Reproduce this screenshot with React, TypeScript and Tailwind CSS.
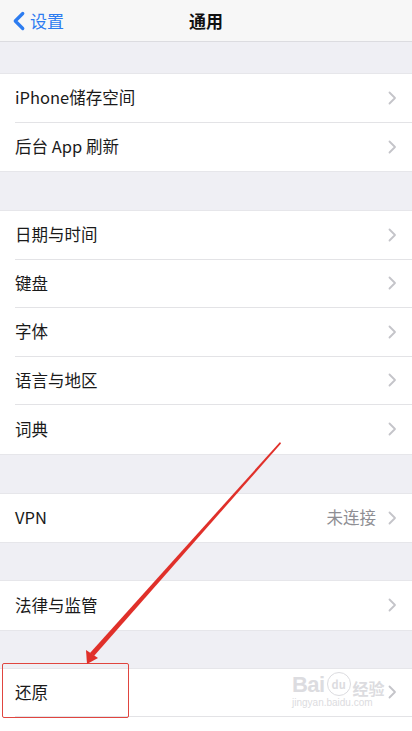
import { ChevronLeft } from "lucide-react";

const font = { fontFamily: '"Noto Sans CJK SC", "Noto Sans", sans-serif' };

function Chevron() {
  return (
    <svg width="9" height="14" viewBox="0 0 9 14" className="shrink-0">
      <path d="M1.5 1.5 L7 7 L1.5 12.5" fill="none" stroke="#c4c4c9" strokeWidth="1.8" strokeLinecap="round" strokeLinejoin="round" />
    </svg>
  );
}

function Row({ label, value, last }: { label: string; value?: string; last?: boolean }) {
  return (
    <div className="flex h-[48.5px] items-center bg-white pl-[15px]">
      <div className={"flex h-full flex-1 items-center pr-[15px] " + (last ? "" : "border-b border-[#e3e3e6]")}>
        <span className="flex-1 text-[16.5px] text-[#1a1a1a]">{label}</span>
        {value && <span className="mr-[12px] text-[16.5px] text-[#8e8e93]">{value}</span>}
        {label && <Chevron />}
      </div>
    </div>
  );
}

function Group({ items }: { items: { label: string; value?: string }[] }) {
  return (
    <div className="border-y border-[#e6e6ea]">
      {items.map((it, i) => (
        <Row key={it.label + i} label={it.label} value={it.value} last={i === items.length - 1} />
      ))}
    </div>
  );
}

export default function App() {
  return (
    <div className="relative h-[731px] w-[412px] overflow-hidden bg-[#efeff4]" style={font}>
      <div className="relative flex h-[42px] items-center border-b border-[#dcdce0] bg-[#f7f7f7]">
        <div className="flex items-center pl-[4px] text-[#2d7cf0]">
          <ChevronLeft size={30} strokeWidth={2.6} />
          <span className="-ml-[4px] text-[17px]">设置</span>
        </div>
        <span className="absolute left-1/2 -translate-x-1/2 text-[17px] font-semibold text-[#111]">通用</span>
      </div>
      <div className="h-[31px]" />
      <Group items={[{ label: "iPhone储存空间" }, { label: "后台 App 刷新" }]} />
      <div className="h-[38px]" />
      <Group items={[{ label: "日期与时间" }, { label: "键盘" }, { label: "字体" }, { label: "语言与地区" }, { label: "词典" }]} />
      <div className="h-[38px]" />
      <Group items={[{ label: "VPN", value: "未连接" }]} />
      <div className="h-[37px]" />
      <Group items={[{ label: "法律与监管" }]} />
      <div className="h-[37px]" />
      <Group items={[{ label: "还原" }, { label: "" }]} />

      <div className="pointer-events-none absolute left-[2px] top-[663px] h-[55px] w-[127px] rounded-[2px] border-[1.5px] border-[#e0453f]" />

      <div className="pointer-events-none absolute left-[292px] top-[672px] flex flex-col items-start text-[#dcdce0]">
        <div className="flex items-end">
          <span className="text-[22px] font-bold leading-none tracking-tight" style={{ fontFamily: '"Liberation Sans", sans-serif' }}>Bai</span>
          <span className="ml-[2px] flex h-[24px] w-[24px] items-center justify-center rounded-full border border-[#dcdce0] text-[11px] font-bold">du</span>
          <span className="ml-[2px] text-[16px] font-bold leading-none">经验</span>
        </div>
        <span className="mt-[2px] text-[10px] leading-none" style={{ fontFamily: '"Liberation Sans", sans-serif' }}>jingyan.baidu.com</span>
      </div>

      <svg className="pointer-events-none absolute left-0 top-0" width="412" height="731" viewBox="0 0 412 731">
        <polygon points="280,442 281,443.5 94,656 90,653" fill="#e0302a" />
        <polygon points="87,664 86,650 98,658" fill="#e0302a" />
      </svg>
    </div>
  );
}
